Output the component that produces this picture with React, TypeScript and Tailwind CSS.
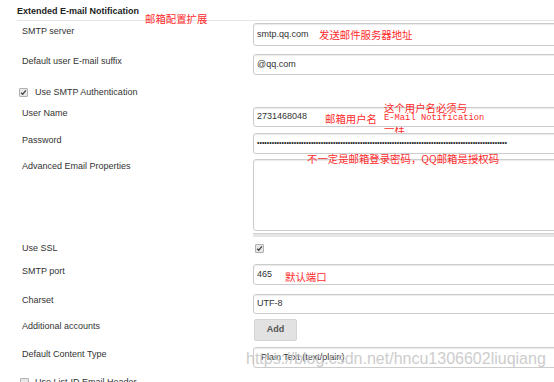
import React from "react";

const Check = ({ checked = true }: { checked?: boolean }) => (
  <span className="inline-flex w-[9px] h-[9px] items-center justify-center border border-[#b0b0b0] bg-[#e8e8e8] rounded-[1px] shrink-0">
    {checked && (
      <svg width="7" height="7" viewBox="0 0 7 7">
        <path d="M1.1 3.7 L2.7 5.2 L5.9 1.4" fill="none" stroke="#444" strokeWidth="1.3" />
      </svg>
    )}
  </span>
);

const Label = ({ children, pt = "pt-[2px]" }: { children: React.ReactNode; pt?: string }) => (
  <div className={`w-[253px] shrink-0 pl-[22px] leading-[11px] ${pt}`}>{children}</div>
);

const boxCls =
  "relative z-10 w-[330px] shrink-0 border border-[#cccccc] rounded-[3px] bg-white shadow-[inset_0_1px_1px_rgba(0,0,0,0.08)] flex items-center";

export default function App() {
  const cjk = "font-['Noto_Sans_CJK_SC',sans-serif] text-[10.4px] leading-none text-[#ff2a2a] whitespace-nowrap";
  return (
    <div className="relative w-[554px] h-[382px] overflow-hidden bg-white font-['Liberation_Sans',Arial,sans-serif] text-[9px] text-[#333]">
      {/* Header */}
      <div className="ml-[17px] h-[21px] border-b border-[#e5e5e5] pt-[6px] leading-[11px] font-bold text-[#222]">
        Extended E-mail Notification
      </div>

      {/* SMTP server */}
      <div className="flex mt-[2px]">
        <Label pt="pt-[3px]">SMTP server</Label>
        <div className={`${boxCls} h-[23px] pl-[3px]`}>smtp.qq.com</div>
      </div>

      {/* Default suffix */}
      <div className="flex mt-[8px]">
        <Label pt="pt-[2px]">Default user E-mail suffix</Label>
        <div className={`${boxCls} h-[21px] pl-[3px]`}>@qq.com</div>
      </div>

      {/* Use SMTP Authentication */}
      <div className="flex items-center mt-[10px] h-[14px] pl-[19px] gap-[7px] leading-[11px]">
        <Check />
        <span>Use SMTP Authentication</span>
      </div>

      {/* User Name */}
      <div className="flex mt-[8px]">
        <Label pt="pt-[1px]">User Name</Label>
        <div className={`${boxCls} h-[20px] pl-[3px]`}>2731468048</div>
      </div>

      {/* Password */}
      <div className="flex mt-[6px]">
        <Label pt="pt-[2px]">Password</Label>
        <div className={`${boxCls} h-[21px] pl-[3px] text-[7px] text-[#222] overflow-hidden whitespace-nowrap`}>
          {"•".repeat(102)}
        </div>
      </div>

      {/* Advanced Email Properties */}
      <div className="flex mt-[5px]">
        <Label pt="pt-[2px]">Advanced Email Properties</Label>
        <div className="w-[330px] shrink-0 flex flex-col">
          <div className={`${boxCls} h-[72px]`} />
          <div className="mt-[2px] h-[4px] bg-[#e6e6e6] border-t border-[#d3d3d3]" />
        </div>
      </div>

      {/* Use SSL */}
      <div className="flex items-center mt-[6px] h-[11px]">
        <div className="w-[253px] shrink-0 pl-[22px] leading-[11px]">Use SSL</div>
        <div className="pl-[2px] flex items-center">
          <Check />
        </div>
      </div>

      {/* SMTP port */}
      <div className="flex mt-[10px]">
        <Label pt="pt-[2px]">SMTP port</Label>
        <div className={`${boxCls} h-[21px] pl-[3px]`}>465</div>
      </div>

      {/* Charset */}
      <div className="flex mt-[9px]">
        <Label pt="pt-[1px]">Charset</Label>
        <div className={`${boxCls} h-[20px] pl-[3px]`}>UTF-8</div>
      </div>

      {/* Additional accounts */}
      <div className="flex mt-[5px]">
        <Label pt="pt-[2px]">Additional accounts</Label>
        <div className="ml-[1px] w-[43px] h-[22px] flex items-center justify-center bg-[#e2e2e2] border border-[#d4d4d4] rounded-[2px] font-bold text-[#555]">
          Add
        </div>
      </div>

      {/* Default Content Type */}
      <div className="flex mt-[6px]">
        <Label pt="pt-[2px]">Default Content Type</Label>
        <div className={`${boxCls} h-[21px] pl-[7px]`}>Plain Text (text/plain)</div>
      </div>

      {/* Partially visible last row */}
      <div className="flex items-center mt-[9px] h-[11px] pl-[20px] gap-[6px] leading-[11px]">
        <Check checked={false} />
        <span>Use List-ID Email Header</span>
      </div>

      {/* Annotations */}
      <div className={`absolute z-20 left-[145px] top-[14px] ${cjk}`}>邮箱配置扩展</div>
      <div className={`absolute z-20 left-[319px] top-[30px] ${cjk}`}>发送邮件服务器地址</div>
      <div className={`absolute z-20 left-[384px] top-[103px] ${cjk}`}>这个用户名必须与</div>
      <div className="absolute z-20 left-[384px] top-[113px] font-['Liberation_Mono',monospace] text-[8.8px] leading-[11px] text-[#ff2a2a] whitespace-nowrap">
        E-Mail Notification
      </div>
      <div className={`absolute z-0 left-[384px] top-[124px] ${cjk}`}>一样</div>
      <div className={`absolute z-20 left-[325px] top-[114px] ${cjk}`}>邮箱用户名</div>
      <div className={`absolute z-20 left-[307px] top-[154px] ${cjk}`}>不一定是邮箱登录密码，QQ邮箱是授权码</div>
      <div className={`absolute z-20 left-[285px] top-[272px] ${cjk}`}>默认端口</div>

      {/* Watermark */}
      <div className="absolute z-30 left-[246px] top-[351px] text-[16px] leading-none text-[#c8c8c8] opacity-90 whitespace-nowrap">
        https://blog.csdn.net/hncu1306602liuqiang
      </div>
    </div>
  );
}
